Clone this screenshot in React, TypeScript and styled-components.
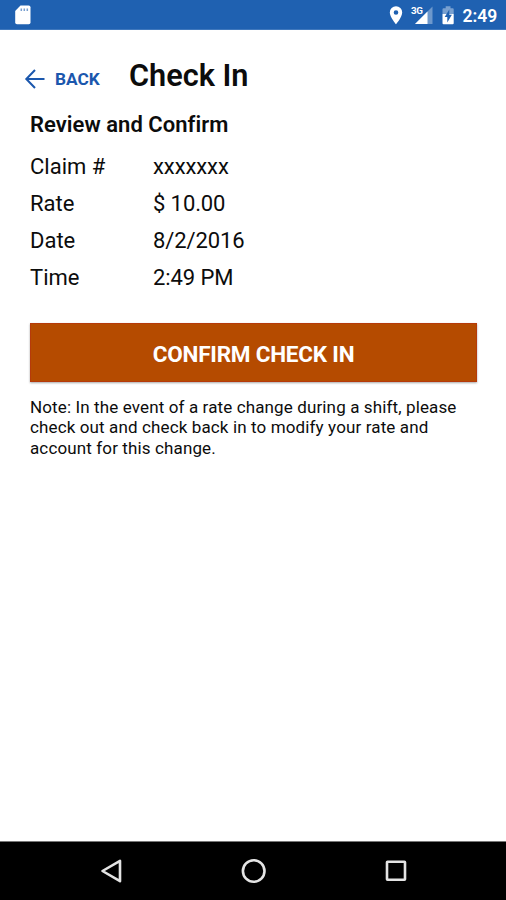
import React from "react";
import styled, { createGlobalStyle } from "styled-components";

const GlobalStyle = createGlobalStyle`
  * { box-sizing: border-box; }
  body { margin: 0; background: #fff; }
`;

const Screen = styled.div`
  width: 506px;
  height: 900px;
  display: flex;
  flex-direction: column;
  overflow: hidden;
  background: #fff;
  color: #0c0c0c;
  font-family: Roboto, "Liberation Sans", sans-serif;
`;

const StatusBar = styled.header`
  height: 30px;
  flex: none;
  display: flex;
  align-items: stretch;
  background: #1f61b1;
  border-bottom: 1px solid #3f78bd;
  color: #fff;
`;

const CardIcon = styled.svg`
  flex: none;
  margin-right: auto;
`;

const StatusIcons = styled.svg`
  flex: none;
`;

const Clock = styled.span`
  width: 43.5px;
  padding-top: 2px;
  font-size: 17.5px;
  line-height: 28px;
  font-weight: 600;
  white-space: nowrap;
`;

const Content = styled.main`
  flex: 1;
  padding: 26px 29px 0 30px;
`;

const TitleRow = styled.div`
  display: flex;
  height: 48px;
  margin-left: -6px;
`;

const BackButton = styled.button`
  width: 105px;
  height: 46px;
  padding: 0;
  border: 0;
  display: flex;
  align-items: center;
  gap: 9px;
  background: none;
  color: #1b57ad;
  font-family: inherit;
  font-size: 17.3px;
  font-weight: 700;
  line-height: 20px;
`;

const Title = styled.h1`
  margin: 0;
  font-size: 30.7px;
  line-height: 40px;
  font-weight: 600;
  white-space: nowrap;
`;

const Subtitle = styled.h2`
  margin: 6px 0 8px;
  height: 30px;
  font-size: 22px;
  line-height: 30px;
  font-weight: 600;
  letter-spacing: 0.04px;
  white-space: nowrap;
`;

const Details = styled.dl`
  margin: 0;
  display: grid;
  grid-template-columns: 123px 1fr;
  grid-auto-rows: 37px;
  font-size: 22px;
  line-height: 37px;
  white-space: nowrap;
`;

const Label = styled.dt`
  letter-spacing: 0;
`;

const Value = styled.dd`
  margin: 0;
  letter-spacing: -0.1px;
`;

const ConfirmButton = styled.button`
  display: block;
  width: 447px;
  height: 59px;
  margin: 27px 0 15px;
  padding: 2px 0 0;
  border: 1px solid #b63a0a;
  background: #b54b00;
  box-shadow: 0 1px 2px rgba(0, 0, 0, 0.35);
  color: #fff;
  font-family: inherit;
  font-size: 22.5px;
  font-weight: 700;
  letter-spacing: -0.22px;
`;

const Note = styled.p`
  margin: 0;
  font-size: 17px;
  line-height: 20.4px;
  letter-spacing: 0.125px;
  white-space: nowrap;
`;

const NoteLine = styled.span`
  display: block;
`;

const NavBar = styled.nav`
  height: 59px;
  flex: none;
  background: #000;
  border-top: 1px solid #777;
  display: grid;
  grid-template-columns: 182px 143px 1fr;
`;

const NavIcon = styled.svg`
  display: block;
  width: 30px;
  height: 58px;
  fill: none;
  stroke: #e4e4e4;
  stroke-width: 2.6;
`;

const NavItem = styled.span<{ $offset: number }>`
  padding-left: ${(p) => p.$offset}px;
`;

const details = [
  { label: "Claim #", value: "xxxxxxx" },
  { label: "Rate", value: "$ 10.00" },
  { label: "Date", value: "8/2/2016" },
  { label: "Time", value: "2:49 PM" },
];

export default function App() {
  return (
    <Screen>
      <GlobalStyle />
      <StatusBar>
        <CardIcon width="40" height="29" viewBox="0 0 40 29">
          <path d="M20.5 5.5h8.2q1.8 0 1.8 1.8v15.2q0 1.8-1.8 1.8H17q-1.8 0-1.8-1.8V11z" fill="#fff" />
          <path d="M21.3 8.5v2.6M24.3 8.5v2.6M27.3 8.5v2.6" stroke="#1f61b1" strokeWidth="1.5" opacity=".6" />
        </CardIcon>
        <StatusIcons width="82.5" height="29" viewBox="380 0 82.5 29">
          <path fillRule="evenodd" fill="#fff" d="M396 6.3a6.2 6.2 0 0 0-6.2 6.2c0 4.6 6.2 11.8 6.2 11.8s6.2-7.2 6.2-11.8A6.2 6.2 0 0 0 396 6.3zm0 3.9a2.3 2.3 0 1 1 0 4.6 2.3 2.3 0 0 1 0-4.6z" />
          <path d="M432.5 6.5V24H415z" fill="#fff" opacity=".35" />
          <path d="M427.5 11.5v12.5h-12.5z" fill="#fff" />
          <text x="411" y="14.3" fill="#fff" fontSize="9.8" fontWeight="700" textLength="12">3G</text>
          <path d="M442.5 9.2q0-1 1-1h2.2V6.3h4.8v1.9h2.2q1 0 1 1V14h-11.2z" fill="#fff" opacity=".4" />
          <path d="M442.5 14h11.2v9.2q0 1-1 1h-9.2q-1 0-1-1z" fill="#fff" />
          <path d="M449.3 9.5l-4.6 7.4h2.6v5.5l4.6-7.6h-2.6z" fill="#1f61b1" />
        </StatusIcons>
        <Clock>2:49</Clock>
      </StatusBar>
      <Content>
        <TitleRow>
          <BackButton>
            <svg width="22" height="22" viewBox="0 0 22 22" fill="none" stroke="currentColor" strokeWidth="2">
              <path d="M20.5 11H2.5M11 2L2.3 11 11 20" />
            </svg>
            BACK
          </BackButton>
          <Title>Check In</Title>
        </TitleRow>
        <Subtitle>Review and Confirm</Subtitle>
        <Details>
          {details.map((d) => (
            <React.Fragment key={d.label}>
              <Label>{d.label}</Label>
              <Value>{d.value}</Value>
            </React.Fragment>
          ))}
        </Details>
        <ConfirmButton>CONFIRM CHECK IN</ConfirmButton>
        <Note>
          <NoteLine>Note: In the event of a rate change during a shift, please</NoteLine>
          <NoteLine>check out and check back in to modify your rate and</NoteLine>
          <NoteLine>account for this change.</NoteLine>
        </Note>
      </Content>
      <NavBar>
        <NavItem $offset={97}>
          <NavIcon viewBox="97 0 30 58"><path d="M120 18.8v20.4L102.5 29z" strokeLinejoin="round" /></NavIcon>
        </NavItem>
        <NavItem $offset={57}>
          <NavIcon viewBox="239 0 30 58"><circle cx="253.7" cy="29" r="10.8" /></NavIcon>
        </NavItem>
        <NavItem $offset={56}>
          <NavIcon viewBox="381 0 30 58"><rect x="387" y="19.8" width="18" height="18" rx=".5" /></NavIcon>
        </NavItem>
      </NavBar>
    </Screen>
  );
}
